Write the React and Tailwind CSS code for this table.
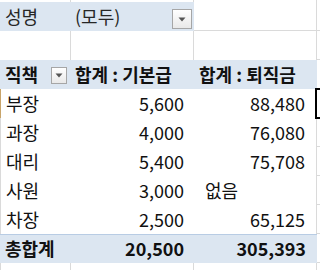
import React from "react";

const G = "border-[#dadada]";
const BLUE = "bg-[#dce6f1]";

function Drop({ className }) {
  return (
    <div
      className={
        "absolute flex items-center justify-center border border-[#a6a6a6] bg-gradient-to-b from-[#ffffff] to-[#e9e9e9] " +
        className
      }
    >
      <svg width="8" height="5" viewBox="0 0 8 5">
        <path d="M0.5 0.5 L7.5 0.5 L4 4.5 Z" fill="#555" />
      </svg>
    </div>
  );
}

function DataRow({ label, a, b, bLeft, active }) {
  return (
    <div className="flex h-[29px]">
      <div
        className={
          "w-[71px] flex items-end pl-[5px] pb-[2px] border-l " +
          (active ? "border-[#c8a46a]" : G)
        }
      >
        {label}
      </div>
      <div className="w-[123px] flex items-end justify-end pr-[10px] pb-[2px]">{a}</div>
      <div
        className={
          "w-[123px] flex items-end pb-[2px] border-r " +
          G +
          (bLeft ? " justify-start pl-[11px]" : " justify-end pr-[11px]")
        }
      >
        {b}
      </div>
      <div className={"flex-1 border-b " + G}></div>
    </div>
  );
}

export default function App() {
  const rows = [
    ["부장", "5,600", "88,480", false, true],
    ["과장", "4,000", "76,080"],
    ["대리", "5,400", "75,708"],
    ["사원", "3,000", "없음", true],
    ["차장", "2,500", "65,125"],
  ];
  return (
    <div className="relative w-[320px] h-[270px] overflow-hidden bg-white text-[18px] leading-[26px] text-[#111] font-['Noto_Sans_CJK_KR',sans-serif]">
      {/* row 0 sliver */}
      <div className="flex h-[2px]">
        <div className={"w-[71px] border-r " + G}></div>
        <div className={"w-[123px] border-r " + G}></div>
        <div className={"w-[123px] border-r " + G}></div>
        <div className="flex-1"></div>
      </div>
      {/* filter row */}
      <div className="flex h-[29px]">
        <div className={"relative w-[194px] flex " + BLUE}>
          <div className="w-[71px] flex items-end pl-[5px] pb-[2px] text-[#262626]">성명</div>
          <div className="flex-1 flex items-end pl-[4px] pb-[2px] text-[#262626]">(모두)</div>
          <Drop className="left-[172px] top-[7px] w-[20px] h-[20px]" />
        </div>
        <div className={"w-[123px] border-r border-b " + G}></div>
        <div className={"flex-1 border-b " + G}></div>
      </div>
      {/* blank row */}
      <div className="flex h-[29px]">
        <div className={"w-[71px] border-r " + G}></div>
        <div className={"w-[123px] border-r " + G}></div>
        <div className={"w-[123px] border-r " + G}></div>
        <div className={"flex-1 border-b " + G}></div>
      </div>
      {/* header row */}
      <div className="flex h-[29px]">
        <div className={"w-[317px] flex font-bold " + BLUE}>
          <div className="relative w-[71px] flex items-end pl-[5px] pb-[2px]">
            직책
            <Drop className="left-[51px] top-[7px] w-[16px] h-[17px]" />
          </div>
          <div className="w-[123px] flex items-end pl-[4px] pb-[2px] whitespace-pre">합계 : 기본급</div>
          <div className="w-[123px] flex items-end pl-[5px] pb-[2px] whitespace-pre">합계 : 퇴직금</div>
        </div>
        <div className={"flex-1 border-b " + G}></div>
      </div>
      {rows.map((r) => (
        <DataRow key={r[0]} label={r[0]} a={r[1]} b={r[2]} bLeft={r[3]} active={r[4]} />
      ))}
      {/* total row */}
      <div className="flex h-[29px]">
        <div className={"w-[317px] flex font-bold border-t border-[#b8cce4] " + BLUE}>
          <div className="w-[71px] flex items-end pl-[5px] pb-[2px]">총합계</div>
          <div className="w-[123px] flex items-end justify-end pr-[10px] pb-[2px]">20,500</div>
          <div className="w-[123px] flex items-end justify-end pr-[11px] pb-[2px]">305,393</div>
        </div>
        <div className={"flex-1 border-b " + G}></div>
      </div>
      {/* row 10 */}
      <div className="flex h-[20px]">
        <div className={"w-[71px] border-r border-l " + G}></div>
        <div className={"w-[123px] border-r " + G}></div>
        <div className={"w-[123px] border-r " + G}></div>
        <div className="flex-1"></div>
      </div>
      {/* active cell selection */}
      <div className="absolute left-[315px] top-[88px] w-[12px] h-[31px] border-2 border-black"></div>
    </div>
  );
}
